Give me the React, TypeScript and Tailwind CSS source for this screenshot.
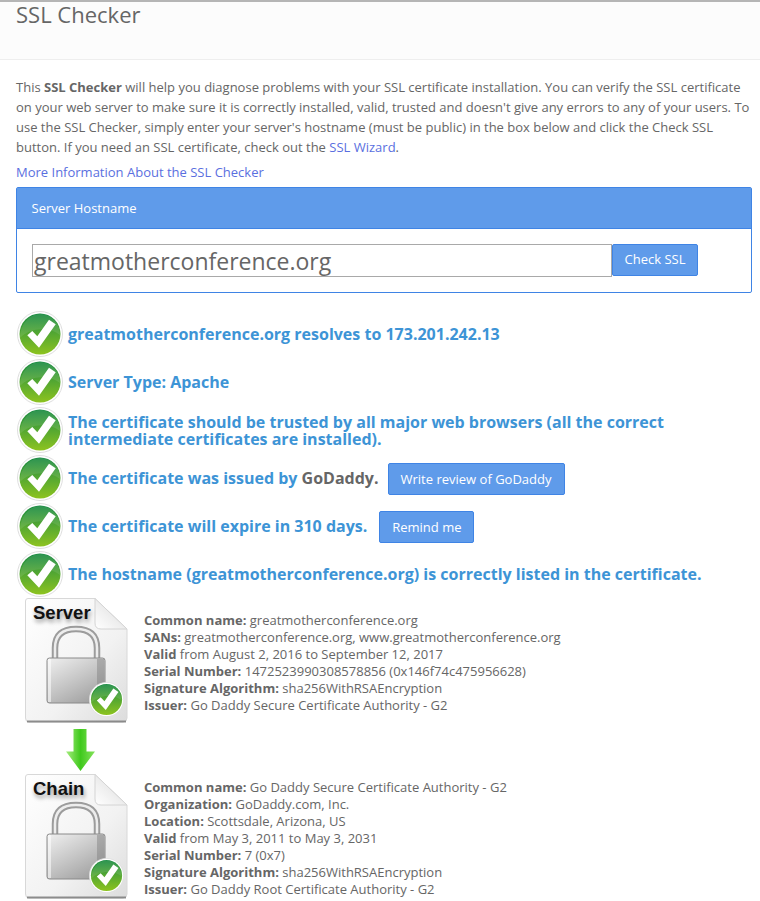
import { useId, type ReactNode } from "react";

// green tick ball used in the result rows and, smaller, on the cert icons
function CheckBall({ size = 46 }: { size?: number }) {
  const id = useId();
  return (
    <svg width={size} height={size} viewBox="0 0 46 46" className="shrink-0">
      <defs>
        <linearGradient id={id} x1="0" y1="0" x2="0" y2="1">
          <stop offset="0" stopColor="#14883f" />
          <stop offset="0.45" stopColor="#4fa533" />
          <stop offset="1" stopColor="#8dc31f" />
        </linearGradient>
      </defs>
      <circle cx="23" cy="23" r="22.5" fill="#fff" stroke="#dedede" />
      <circle cx="23" cy="23" r="20.5" fill={`url(#${id})`} />
      <path d="M3 27 C12 17 32 15 43 24 C43 12 34 3 23 3 C12 3 3 14 3 27Z" fill="#fff" opacity="0.1" />
      <path d="M10.3 24.3 L15.3 20 L20.3 25.3 L32 8.7 L38.7 13.3 L22 36.7 Z" fill="#fff" />
    </svg>
  );
}

function CertIcon({ label }: { label: string }) {
  const id = useId();
  return (
    <div className="relative h-[125px] w-[105px] shrink-0">
      <svg width="105" height="125" viewBox="0 0 105 125" className="block">
        <defs>
          <linearGradient id={`${id}p`} x1="0" y1="0" x2="1" y2="1">
            <stop offset="0" stopColor="#ffffff" />
            <stop offset="0.6" stopColor="#f2f2f2" />
            <stop offset="1" stopColor="#dcdcdc" />
          </linearGradient>
          <linearGradient id={`${id}b`} x1="0" y1="0" x2="0.7" y2="1">
            <stop offset="0" stopColor="#f0f0f0" />
            <stop offset="0.55" stopColor="#c6c6c6" />
            <stop offset="1" stopColor="#a2a2a2" />
          </linearGradient>
          <linearGradient id={`${id}f`} x1="0" y1="1" x2="1" y2="0">
            <stop offset="0" stopColor="#ffffff" />
            <stop offset="1" stopColor="#d8d8d8" />
          </linearGradient>
        </defs>
        <path d="M4 0.5 H71 L103 31 V120 Q103 124 99 124 H5 Q1.5 124 1.5 120 V3 Q1.5 0.5 4 0.5Z" fill={`url(#${id}p)`} stroke="#d8d8d8" />
        <path d="M3 123.5 H102" stroke="#6f6f6f" strokeWidth="2" opacity="0.75" />
        <path d="M71 0.5 L103 31 H77 Q71 31 71 25Z" fill={`url(#${id}f)`} stroke="#d4d4d4" />
        <path d="M31 62 V50 Q31 31 52 31 Q73 31 73 50 V62" fill="none" stroke="#9c9c9c" strokeWidth="6.5" />
        <path d="M31 62 V50 Q31 31 52 31 Q73 31 73 50 V62" fill="none" stroke="#ededed" strokeWidth="2.5" />
        <rect x="23" y="60" width="58" height="45" rx="2.5" fill={`url(#${id}b)`} stroke="#8a8a8a" />
        <rect x="73" y="61" width="7" height="43" fill="#7f7f7f" opacity="0.45" />
        <rect x="24" y="61" width="3" height="43" fill="#fff" opacity="0.55" />
      </svg>
      <span className="absolute left-[9px] top-[3px] font-['Liberation_Sans',sans-serif] text-[18.5px] font-bold leading-[24px] text-[#111] [text-shadow:1px_3px_4px_rgba(0,0,0,0.4)]">
        {label}
      </span>
      <div className="absolute left-[65px] top-[84px]">
        <CheckBall size={35} />
      </div>
    </div>
  );
}

function ChainArrow() {
  return (
    <svg width="31" height="44" viewBox="0 0 31 44" className="block">
      <defs>
        <linearGradient id="arrow" x1="0" y1="0" x2="1" y2="0">
          <stop offset="0" stopColor="#a6ec7e" />
          <stop offset="0.5" stopColor="#3fc91c" />
          <stop offset="1" stopColor="#86e25c" />
        </linearGradient>
      </defs>
      <path d="M8.5 1 H21.5 V23.5 H30 L15.5 43 L1 23.5 H8.5Z" fill="url(#arrow)" />
    </svg>
  );
}

function Result({ children, className = "" }: { children: ReactNode; className?: string }) {
  return (
    <div className="flex h-[48px] items-center gap-[5px]">
      <CheckBall />
      <div className={`text-[16px] font-bold leading-[17px] text-[#3d94d6] ${className}`}>{children}</div>
    </div>
  );
}

function Btn({ children, className = "" }: { children: ReactNode; className?: string }) {
  return (
    <button className={`h-[32px] rounded-[2px] border border-[#3f84e5] bg-[#5f9bea] text-[13px] font-normal text-white ${className}`}>
      {children}
    </button>
  );
}

function Detail({ k, v }: { k: string; v: string }) {
  return (
    <div>
      <b className="font-bold">{k}</b> {v}
    </div>
  );
}

export default function App() {
  return (
    <div className="h-[901px] overflow-hidden bg-white font-['Open_Sans',sans-serif] text-[13px] text-[#666]">
      <div className="h-[60px] border-t-2 border-b border-t-[#b5b5b5] border-b-[#eee] bg-[#fcfcfc] px-4">
        <h1 className="text-[22px] font-normal leading-[24px] text-[#666]">SSL Checker</h1>
      </div>

      <div className="px-4 pt-[17px]">
        <p className="w-[736px] leading-[20px]">
          This <b>SSL Checker</b> will help you diagnose problems with your SSL certificate installation. You can verify the SSL certificate on your web server to make sure it is correctly installed, valid, trusted and doesn't give any errors to any of your users. To use the SSL Checker, simply enter your server's hostname (must be public) in the box below and click the Check SSL button. If you need an SSL certificate, check out the <a className="text-[#5a6fe0]">SSL Wizard</a>.
        </p>
        <p className="mt-[5px] leading-[20px] text-[#5a6fe0]">More Information About the SSL Checker</p>

        <div className="mt-[5px] w-[736px] rounded-[2px] border border-[#3f84e5]">
          <div className="flex h-[41px] items-center border-b border-[#3f84e5] bg-[#5f9bea] px-[14.5px] pt-[2px] text-white">
            Server Hostname
          </div>
          <div className="flex h-[63px] items-start px-[15px] pt-[15px]">
            <input
              readOnly
              value="greatmotherconference.org"
              className="h-[33px] w-[580px] border border-[#a9a9a9] px-[1px] pt-[1px] text-[23px] text-[#666] outline-none"
            />
            <Btn className="w-[86px]">Check SSL</Btn>
          </div>
        </div>
      </div>

      <div className="px-[17px] pt-[17px]">
        <Result>greatmotherconference.org resolves to 173.201.242.13</Result>
        <Result>Server Type: Apache</Result>
        <Result className="mt-[1px] w-[670px]">
          The certificate should be trusted by all major web browsers (all the correct intermediate certificates are installed).
        </Result>
        <Result className="mt-[2px]">
          The certificate was issued by <span className="text-[#666]">GoDaddy.</span>
          <Btn className="ml-[9px] w-[177px]">Write review of GoDaddy</Btn>
        </Result>
        <Result className="mt-[2px]">
          The certificate will expire in 310 days.
          <Btn className="ml-[12px] w-[95px]">Remind me</Btn>
        </Result>
        <Result>The hostname (greatmotherconference.org) is correctly listed in the certificate.</Result>
      </div>

      <div className="pl-[24px] text-[13px] leading-[17px]">
        <div className="flex gap-[15px]">
          <CertIcon label="Server" />
          <div className="pt-[14px]">
            <Detail k="Common name:" v="greatmotherconference.org" />
            <Detail k="SANs:" v="greatmotherconference.org, www.greatmotherconference.org" />
            <Detail k="Valid" v="from August 2, 2016 to September 12, 2017" />
            <Detail k="Serial Number:" v="1472523990308578856 (0x146f74c475956628)" />
            <Detail k="Signature Algorithm:" v="sha256WithRSAEncryption" />
            <Detail k="Issuer:" v="Go Daddy Secure Certificate Authority - G2" />
          </div>
        </div>
        <div className="ml-[41px] mt-[5px] h-[46px]">
          <ChainArrow />
        </div>
        <div className="flex gap-[15px]">
          <CertIcon label="Chain" />
          <div className="pt-[5px]">
            <Detail k="Common name:" v="Go Daddy Secure Certificate Authority - G2" />
            <Detail k="Organization:" v="GoDaddy.com, Inc." />
            <Detail k="Location:" v="Scottsdale, Arizona, US" />
            <Detail k="Valid" v="from May 3, 2011 to May 3, 2031" />
            <Detail k="Serial Number:" v="7 (0x7)" />
            <Detail k="Signature Algorithm:" v="sha256WithRSAEncryption" />
            <Detail k="Issuer:" v="Go Daddy Root Certificate Authority - G2" />
          </div>
        </div>
      </div>
    </div>
  );
}
